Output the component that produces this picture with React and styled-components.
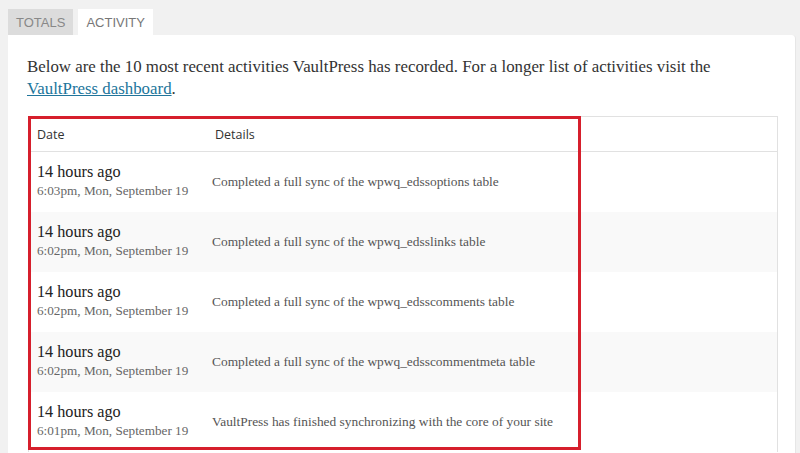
import React from 'react';
import styled, { createGlobalStyle } from 'styled-components';

const GlobalStyle = createGlobalStyle`
    html, body {
        margin: 0;
        padding: 0;
        background: #f1f1f1;
    }
    body {
        font-family: "Liberation Serif", serif;
    }
`;

const Page = styled.div`
    padding: 9px 4px 0 8px;
    height: 453px;
    box-sizing: border-box;
    overflow: hidden;
`;

const Tabs = styled.div`
    display: flex;
    gap: 5px;
`;

const Tab = styled.div`
    height: 26px;
    padding: 0 8px;
    display: flex;
    align-items: center;
    font-family: "Liberation Sans", Arial, sans-serif;
    font-size: 13px;
    text-transform: uppercase;
    background: ${p => (p.active ? '#fff' : '#dcdcdc')};
    color: ${p => (p.active ? '#777' : '#888')};
`;

const Panel = styled.div`
    background: #fff;
    border-top-right-radius: 4px;
    padding: 21px 19px 0 19px;
    height: 420px;
    box-sizing: border-box;
    border-right: 1px solid #e6e6e6;
`;

const Intro = styled.p`
    margin: 0;
    font-family: "Liberation Serif", serif;
    font-size: 16.85px;
    line-height: 22px;
    color: #333;

    a {
        color: #21759b;
        text-decoration: underline;
    }
`;

const TableWrap = styled.div`
    position: relative;
    margin-top: 16px;
    margin-left: 1px;
    width: 750px;
`;

const Table = styled.table`
    width: 100%;
    border-collapse: collapse;
    border: 1px solid #e1e1e1;
    border-bottom: none;
`;

const HeadCell = styled.th`
    text-align: left;
    font-weight: normal;
    font-family: "Open Sans", "Noto Sans", sans-serif;
    font-size: 12.5px;
    color: #333;
    height: 34px;
    padding: 0 0 0 ${p => p.pad || 8}px;
    border-bottom: 1px solid #e1e1e1;
    width: ${p => p.width || 'auto'};
`;

const Row = styled.tr`
    background: ${p => (p.striped ? '#f9f9f9' : '#fff')};
    height: 60px;
`;

const DateCell = styled.td`
    padding: 0 0 0 8px;
    vertical-align: middle;
`;

const Ago = styled.div`
    font-size: 16.2px;
    line-height: 19px;
    color: #222;
`;

const When = styled.div`
    font-size: 13.2px;
    line-height: 18px;
    color: #666;
`;

const DetailCell = styled.td`
    padding: 0 0 0 5px;
    font-size: 13.4px;
    color: #555;
    vertical-align: middle;
`;

const Highlight = styled.div`
    position: absolute;
    left: 0;
    top: 0;
    width: 553px;
    height: 334px;
    border: 3px solid #d61f2c;
    box-sizing: border-box;
    pointer-events: none;
`;

const activities = [
    { ago: '14 hours ago', when: '6:03pm, Mon, September 19', text: 'Completed a full sync of the wpwq_edssoptions table' },
    { ago: '14 hours ago', when: '6:02pm, Mon, September 19', text: 'Completed a full sync of the wpwq_edsslinks table' },
    { ago: '14 hours ago', when: '6:02pm, Mon, September 19', text: 'Completed a full sync of the wpwq_edsscomments table' },
    { ago: '14 hours ago', when: '6:02pm, Mon, September 19', text: 'Completed a full sync of the wpwq_edsscommentmeta table' },
    { ago: '14 hours ago', when: '6:01pm, Mon, September 19', text: 'VaultPress has finished synchronizing with the core of your site' },
];

const App = () => {
    return (
        <>
            <GlobalStyle />
            <Page>
                <Tabs>
                    <Tab>Totals</Tab>
                    <Tab active>Activity</Tab>
                </Tabs>
                <Panel>
                    <Intro>
                        Below are the 10 most recent activities VaultPress has recorded. For a longer list of activities visit the{' '}
                        <a href="#">VaultPress dashboard</a>.
                    </Intro>
                    <TableWrap>
                        <Table>
                            <thead>
                                <tr>
                                    <HeadCell width="170px">Date</HeadCell>
                                    <HeadCell pad={8} width="375px">Details</HeadCell>
                                    <HeadCell />
                                </tr>
                            </thead>
                            <tbody>
                                {activities.map((a, i) => (
                                    <Row key={i} striped={i % 2 === 1}>
                                        <DateCell>
                                            <Ago>{a.ago}</Ago>
                                            <When>{a.when}</When>
                                        </DateCell>
                                        <DetailCell>{a.text}</DetailCell>
                                        <td />
                                    </Row>
                                ))}
                            </tbody>
                        </Table>
                        <Highlight />
                    </TableWrap>
                </Panel>
            </Page>
        </>
    );
};

export default App;
